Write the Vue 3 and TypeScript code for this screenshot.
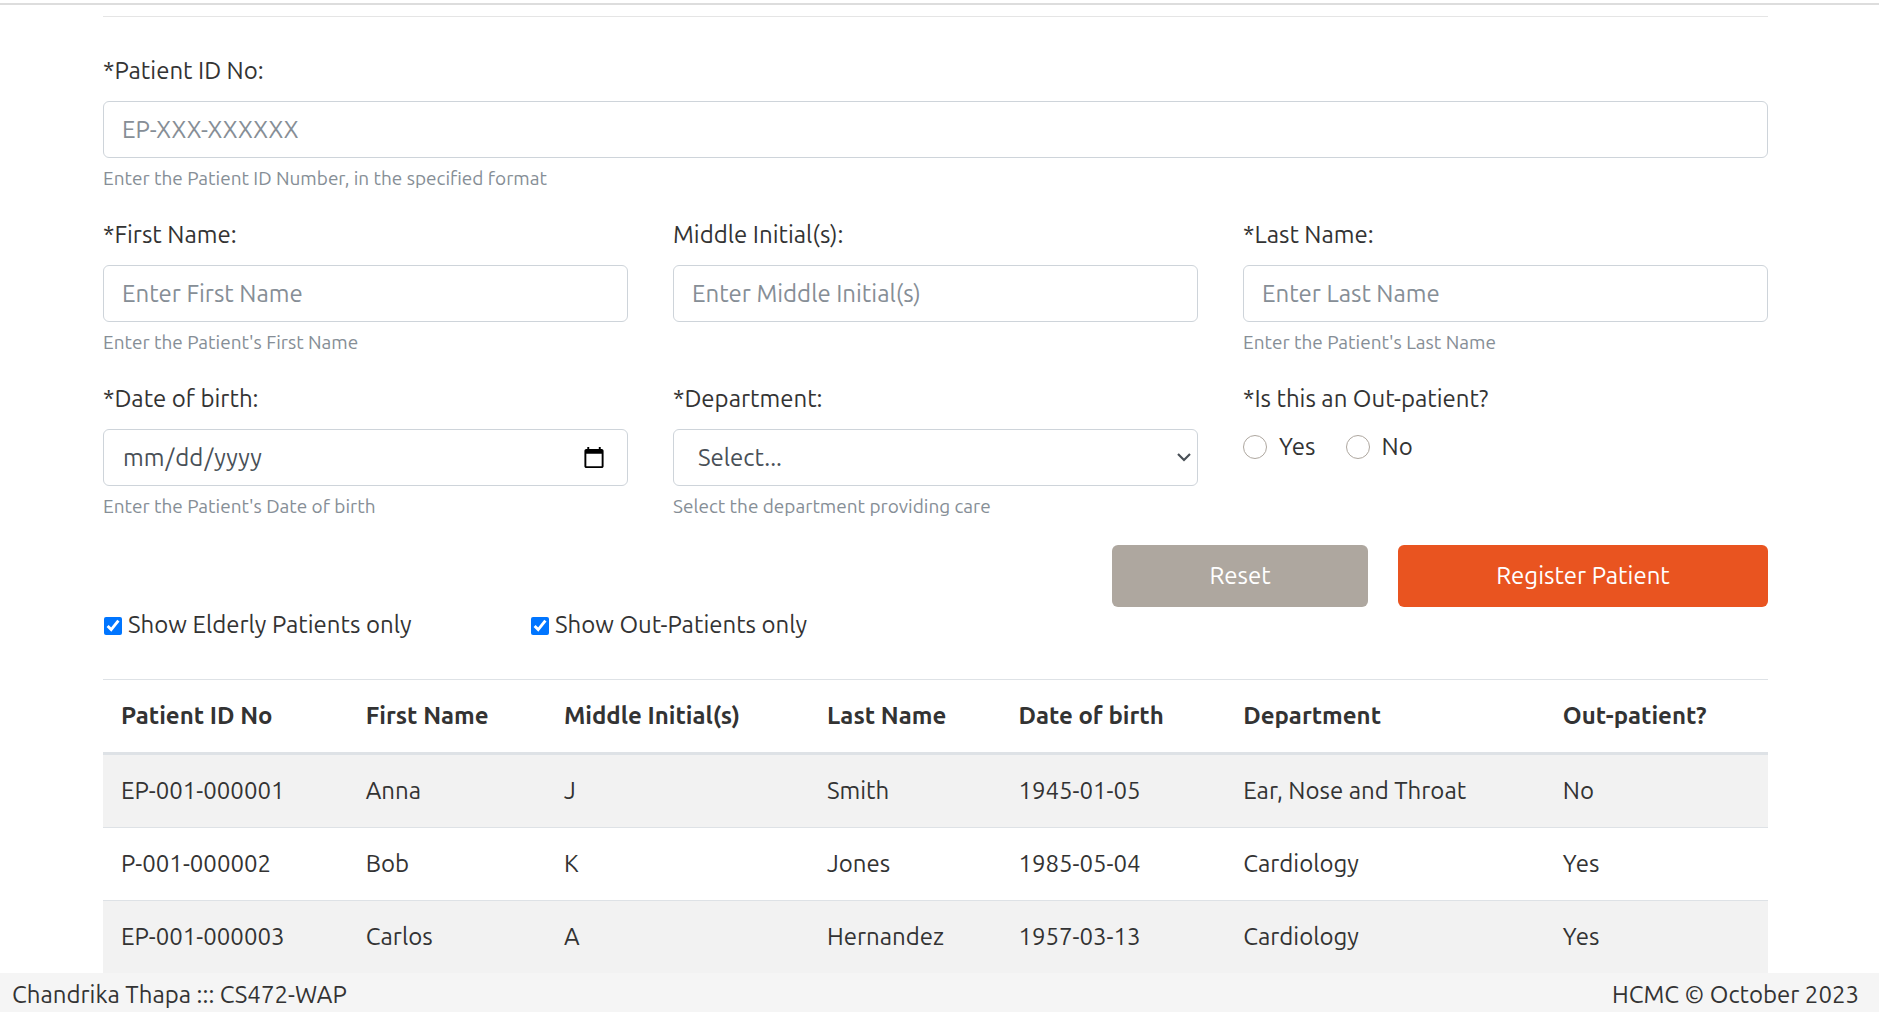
<script setup lang="ts">
import { ref } from 'vue'

interface Patient {
  id: string
  first: string
  middle: string
  last: string
  born: string
  department: string
  outPatient: boolean
}

const patients: Patient[] = [
  { id: 'EP-001-000001', first: 'Anna', middle: 'J', last: 'Smith', born: '1945-01-05', department: 'Ear, Nose and Throat', outPatient: false },
  { id: 'P-001-000002', first: 'Bob', middle: 'K', last: 'Jones', born: '1985-05-04', department: 'Cardiology', outPatient: true },
  { id: 'EP-001-000003', first: 'Carlos', middle: 'A', last: 'Hernandez', born: '1957-03-13', department: 'Cardiology', outPatient: true },
]

const department = ref('')
const outPatient = ref('')
const elderlyOnly = ref(true)
const outPatientsOnly = ref(true)
</script>

<template>
  <div class="page">
    <div class="topbar"></div>
    <main class="container">
      <hr class="rule" />
      <form class="form" @submit.prevent>
        <div class="group wide">
          <label for="patientId">*Patient ID No:</label>
          <input id="patientId" class="control" type="text" placeholder="EP-XXX-XXXXXX" />
          <small class="hint">Enter the Patient ID Number, in the specified format</small>
        </div>

        <div class="group">
          <label for="firstName">*First Name:</label>
          <input id="firstName" class="control" type="text" placeholder="Enter First Name" />
          <small class="hint">Enter the Patient's First Name</small>
        </div>
        <div class="group">
          <label for="middle">Middle Initial(s):</label>
          <input id="middle" class="control" type="text" placeholder="Enter Middle Initial(s)" />
        </div>
        <div class="group">
          <label for="lastName">*Last Name:</label>
          <input id="lastName" class="control" type="text" placeholder="Enter Last Name" />
          <small class="hint">Enter the Patient's Last Name</small>
        </div>

        <div class="group">
          <label for="born">*Date of birth:</label>
          <input id="born" class="control date" type="date" />
          <small class="hint">Enter the Patient's Date of birth</small>
        </div>
        <div class="group">
          <label for="department">*Department:</label>
          <div class="select-wrap">
            <select id="department" v-model="department" class="control select">
              <option value="">Select...</option>
              <option>Cardiology</option>
              <option>Ear, Nose and Throat</option>
            </select>
            <svg class="chevron" viewBox="0 0 14 9" aria-hidden="true">
              <path d="M1 1 L7 7 L13 1" fill="none" stroke="#495057" stroke-width="2.2" />
            </svg>
          </div>
          <small class="hint">Select the department providing care</small>
        </div>
        <fieldset class="group radios">
          <legend>*Is this an Out-patient?</legend>
          <div class="radio-row">
            <label class="radio"><input v-model="outPatient" type="radio" name="out" value="yes" />Yes</label>
            <label class="radio"><input v-model="outPatient" type="radio" name="out" value="no" />No</label>
          </div>
        </fieldset>

        <div class="actions wide">
          <button type="reset" class="btn reset">Reset</button>
          <button type="submit" class="btn register">Register Patient</button>
        </div>
      </form>

      <div class="filters">
        <label class="filter"><input v-model="elderlyOnly" type="checkbox" />Show Elderly Patients only</label>
        <label class="filter"><input v-model="outPatientsOnly" type="checkbox" />Show Out-Patients only</label>
      </div>

      <table class="patients">
        <thead>
          <tr>
            <th class="c-id" scope="col">Patient ID No</th>
            <th class="c-first" scope="col">First Name</th>
            <th class="c-middle" scope="col">Middle Initial(s)</th>
            <th class="c-last" scope="col">Last Name</th>
            <th class="c-born" scope="col">Date of birth</th>
            <th class="c-dept" scope="col">Department</th>
            <th class="c-out" scope="col">Out-patient?</th>
          </tr>
        </thead>
        <tbody>
          <tr v-for="p in patients" :key="p.id">
            <td>{{ p.id }}</td>
            <td>{{ p.first }}</td>
            <td>{{ p.middle }}</td>
            <td>{{ p.last }}</td>
            <td>{{ p.born }}</td>
            <td>{{ p.department }}</td>
            <td>{{ p.outPatient ? 'Yes' : 'No' }}</td>
          </tr>
        </tbody>
      </table>
    </main>
    <footer class="footer">
      <span>Chandrika Thapa ::: CS472-WAP</span>
      <span>HCMC © October 2023</span>
    </footer>
  </div>
</template>

<style>
body {
  margin: 0;
  background: #fff;
}
</style>

<style scoped>
.page {
  font-family: Ubuntu, 'Noto Sans', sans-serif;
  font-size: 24px;
  line-height: 36px;
  color: #333;
}
.page *,
.page *::before {
  box-sizing: border-box;
}
.topbar {
  height: 5px;
  border-bottom: 2px solid #ddd;
  box-sizing: border-box;
}
.container {
  padding: 11px 111px 0 103px;
}
.rule {
  margin: 0 0 36px;
  border: 0;
  border-top: 1px solid #e5e5e5;
}
.form {
  display: grid;
  grid-template-columns: repeat(3, minmax(0, 1fr));
  column-gap: 45px;
}
.wide {
  grid-column: 1 / -1;
}
.group {
  display: flex;
  flex-direction: column;
  min-width: 0;
  margin: 0 0 24px;
  padding: 0;
  border: 0;
}
.group > label,
.radios legend {
  padding: 0;
  margin-bottom: 12px;
}
.control {
  display: block;
  width: 100%;
  height: 57px;
  padding: 9px 18px;
  border: 1px solid #ced4da;
  border-radius: 6px;
  background: #fff;
  color: #495057;
  font: inherit;
}
.control::placeholder {
  color: #868e96;
  opacity: 1;
}
.date::-webkit-calendar-picker-indicator {
  width: 24px;
  height: 24px;
  margin-right: 3px;
  padding: 0;
}
.hint {
  margin-top: 6px;
  font-size: 19px;
  line-height: 29px;
  color: #868e96;
}
.select-wrap {
  display: grid;
  align-items: center;
}
.select {
  grid-area: 1 / 1;
  padding-left: 24px;
  appearance: none;
}
.chevron {
  grid-area: 1 / 1;
  justify-self: end;
  width: 14px;
  height: 9px;
  margin-right: 7px;
  pointer-events: none;
}
.radio-row {
  display: flex;
  gap: 30px;
}
.radio {
  display: flex;
  align-items: center;
  gap: 12px;
}
.radio input {
  width: 24px;
  height: 24px;
  margin: 0;
  border: 1px solid #aea79f;
  border-radius: 50%;
  background: #fff;
  appearance: none;
}
.radio input:checked {
  border: 7px solid #e95420;
}
.actions {
  display: flex;
  justify-content: flex-end;
  gap: 30px;
}
.btn {
  height: 62px;
  padding: 0;
  border: 0;
  border-radius: 6px;
  color: #fff;
  font: inherit;
  cursor: pointer;
}
.reset {
  width: 256px;
  background: #aea79f;
}
.register {
  width: 370px;
  background: #e95420;
}
.filters {
  display: flex;
  margin-bottom: 36px;
}
.filter {
  display: flex;
  flex: 0 0 427px;
  align-items: center;
  gap: 6px;
}
.filter input {
  width: 18px;
  height: 18px;
  margin: 2px 0 0 1px;
  accent-color: #0075ff;
}
.patients {
  width: 100%;
  table-layout: fixed;
  border-collapse: separate;
  border-spacing: 0;
}
.patients th,
.patients td {
  padding: 18px;
  border-top: 1px solid #dee2e6;
  text-align: left;
}
.patients th {
  border-bottom: 3px solid #dee2e6;
}
.patients tbody tr:first-child td {
  border-top: 0;
}
.patients tbody tr:nth-child(odd) {
  background: #f2f2f2;
}
.c-id { width: 14.7%; }
.c-first { width: 11.9%; }
.c-middle { width: 15.8%; }
.c-last { width: 11.5%; }
.c-born { width: 13.5%; }
.c-dept { width: 19.2%; }
.c-out { width: 13.4%; }
.footer {
  display: flex;
  justify-content: space-between;
  padding: 4px 20px 0 12px;
  background: #f5f5f5;
  line-height: 35px;
}
</style>
